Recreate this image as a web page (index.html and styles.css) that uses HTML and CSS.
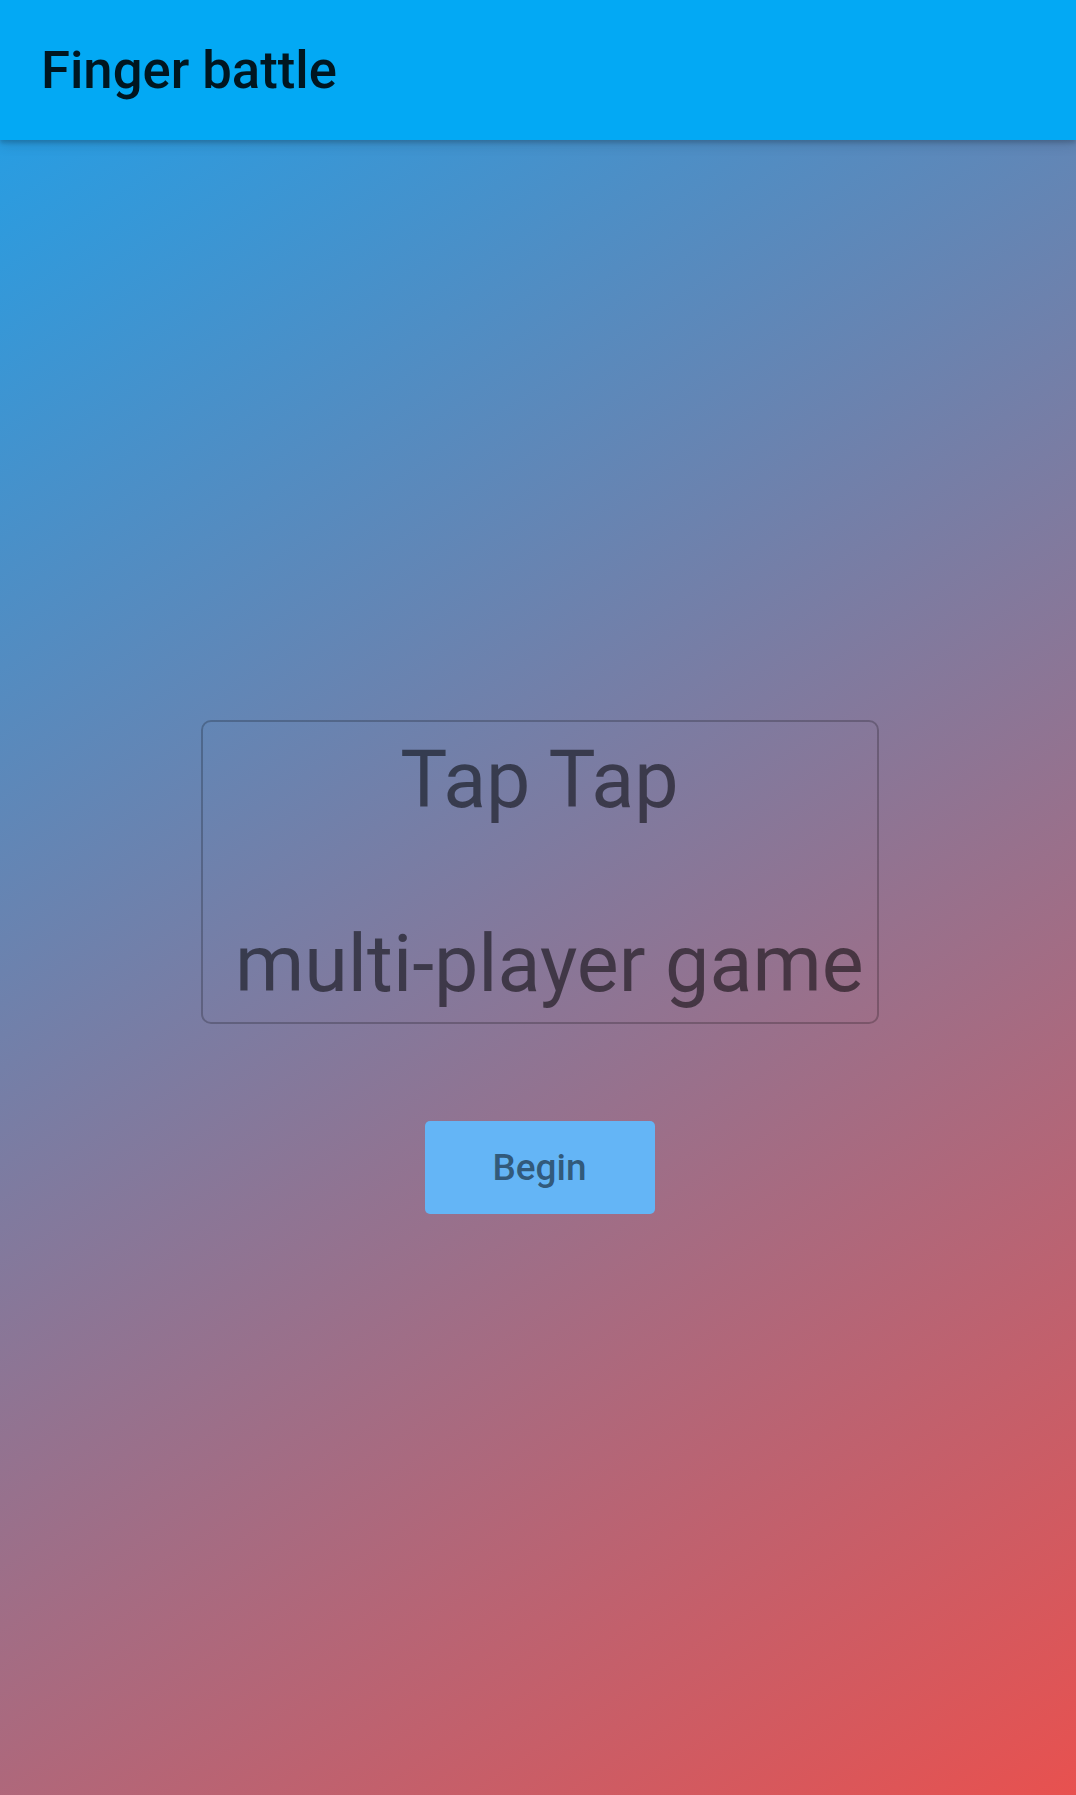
FILE: index.html
```html
<!DOCTYPE html>
<html lang="en">
<head>
<meta charset="utf-8">
<title>Finger battle</title>
<link rel="stylesheet" href="styles.css">
</head>
<body>
  <div class="screen">
    <header class="app-bar">
      <h1 class="app-title">Finger battle</h1>
    </header>
    <main class="content">
      <div class="title-box">
        <p class="title-text">Tap Tap<br><br>&nbsp;multi-player game</p>
      </div>
      <button class="begin-btn" type="button">Begin</button>
    </main>
  </div>
</body>
</html>
```

FILE: styles.css
```css
html, body {
  margin: 0;
  padding: 0;
}

body {
  font-family: Roboto, "Noto Sans", "Liberation Sans", sans-serif;
  width: 1076px;
  height: 1795px;
  overflow: hidden;
}

.screen {
  display: flex;
  flex-direction: column;
  height: 1795px;
}

.app-bar {
  position: relative;
  z-index: 2;
  height: 140px;
  flex: 0 0 140px;
  background: #03a9f4;
  display: flex;
  align-items: center;
  padding-left: 41px;
  box-shadow: 0 3px 4px rgba(0, 0, 0, 0.16), 0 5px 12px rgba(0, 0, 0, 0.12);
}

.app-title {
  margin: 0;
  font-size: 52.6px;
  font-weight: 500;
  color: rgba(0, 0, 0, 0.87);
  line-height: 1;
}

.content {
  flex: 1 1 auto;
  background: linear-gradient(146.97deg, #289de2 0%, #e8514f 100%);
  display: flex;
  flex-direction: column;
  align-items: center;
  justify-content: center;
  gap: 97px;
  padding-bottom: 2px;
}

.title-box {
  box-sizing: border-box;
  width: 678px;
  border: 2px solid rgba(0, 0, 0, 0.22);
  border-radius: 10px;
  padding: 12px 0;
  margin-left: 3px;
}

.title-text {
  margin: 0;
  font-size: 79px;
  font-weight: 400;
  line-height: 92px;
  text-align: center;
  color: rgba(0, 0, 0, 0.53);
  white-space: nowrap;
}

.begin-btn {
  width: 230px;
  height: 93px;
  border: none;
  border-radius: 5px;
  background: #64b5f6;
  color: rgba(0, 0, 0, 0.52);
  font-family: Roboto, "Noto Sans", "Liberation Sans", sans-serif;
  font-size: 37px;
  font-weight: 500;
  padding: 0;
  margin-left: 3px;
}
```
